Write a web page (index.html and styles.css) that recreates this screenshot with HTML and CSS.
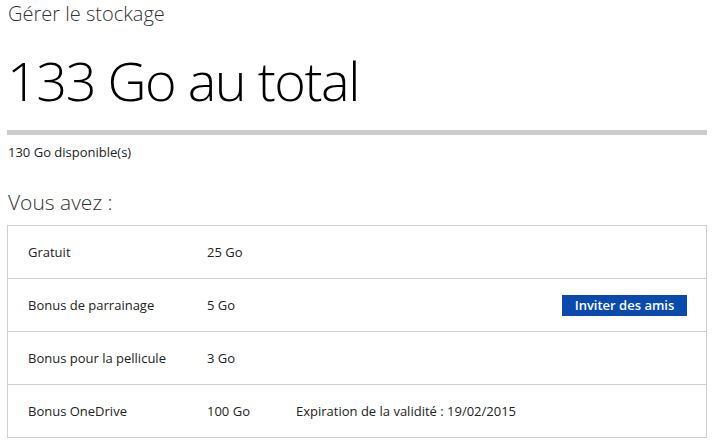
FILE: index.html
```html
<!DOCTYPE html>
<html lang="fr">
<head>
  <meta charset="UTF-8" />
  <meta name="viewport" content="width=device-width, initial-scale=1.0"/>
  <title>Gérer le stockage</title>
  <link rel="stylesheet" href="styles.css">
</head>
<body>

  <header>
    <div class="page-title">Gérer le stockage</div>
    <h1>133 Go au total</h1>
    <div class="usage-bar"></div>
    <div class="available">130 Go disponible(s)</div>
  </header>

  <section>
    <h2>Vous avez :</h2>
    <div class="quota">
      <div class="row">
        <div class="name">Gratuit</div>
        <div class="size">25 Go</div>
      </div>
      <div class="row">
        <div class="name">Bonus de parrainage</div>
        <div class="size">5 Go</div>
        <button class="invite">Inviter des amis</button>
      </div>
      <div class="row">
        <div class="name">Bonus pour la pellicule</div>
        <div class="size">3 Go</div>
      </div>
      <div class="row">
        <div class="name">Bonus OneDrive</div>
        <div class="size">100 Go</div>
        <div class="note">Expiration de la validité : 19/02/2015</div>
      </div>
    </div>
  </section>

</body>
</html>
```

FILE: styles.css
```css
body {
  font-family: "Open Sans", "Liberation Sans", sans-serif;
  margin: 0;
  padding: 0 6px 0 7px;
  background: #fff;
  color: #222;
}
.page-title {
  font-size: 20px;
  font-weight: 300;
  color: #333;
  line-height: 27px;
  margin-left: 1px;
}
h1 {
  font-size: 54px;
  font-weight: 300;
  letter-spacing: -1.5px;
  color: #000;
  margin: 16px 0 0 0;
  line-height: 75px;
}
.usage-bar {
  height: 5px;
  background: #cccccc;
  margin-top: 12px;
}
.available {
  font-size: 13px;
  margin: 8px 0 0 1px;
  line-height: 18px;
}
h2 {
  font-size: 21px;
  font-weight: 300;
  color: #333;
  margin: 27px 0 0 1px;
  line-height: 28px;
}
.quota {
  margin-top: 9px;
  border: 1px solid #cfcfcf;
}
.row {
  display: flex;
  align-items: center;
  height: 52px;
  padding: 0 20px;
  font-size: 13px;
  border-top: 1px solid #cfcfcf;
}
.row:first-child {
  border-top: none;
}
.name {
  width: 179px;
}
.size {
  width: 89px;
}
.invite {
  margin-left: auto;
  margin-right: -1px;
  background: #0b4aad;
  color: #fff;
  border: none;
  font-family: "Open Sans", sans-serif;
  font-weight: 600;
  font-size: 13px;
  width: 125px;
  height: 21px;
  padding: 0;
}
```
